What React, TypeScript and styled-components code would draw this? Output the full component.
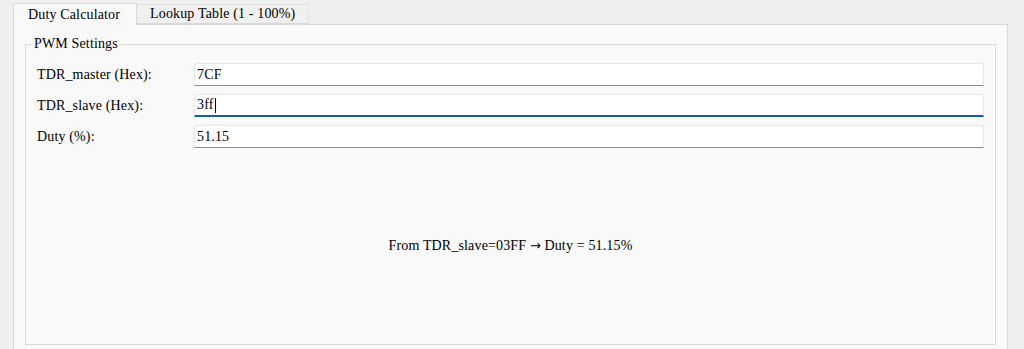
import React from 'react'
import styled, { createGlobalStyle } from 'styled-components'

const GlobalStyle = createGlobalStyle`
  html, body {
    margin: 0;
    padding: 0;
    background: #f0f0f0;
    overflow: hidden;
  }
  body {
    font-family: 'Liberation Serif', 'Noto Sans CJK TC', serif;
    font-size: 14px;
    letter-spacing: 0.15px;
    color: #000;
  }
`

const Window = styled.div`
  width: 1024px;
  height: 349px;
  box-sizing: border-box;
  padding: 3px 16px 0 13px;
  display: flex;
  flex-direction: column;
`

const TabBar = styled.div`
  display: flex;
  align-items: flex-end;
  height: 21px;
  position: relative;
  z-index: 1;
`

const Tab = styled.div<{ $active?: boolean }>`
  box-sizing: border-box;
  height: ${(p) => (p.$active ? '22px' : '20px')};
  margin-bottom: ${(p) => (p.$active ? '-1px' : '0')};
  padding: ${(p) => (p.$active ? '0 16px 0 14px' : '0 13px 0 13px')};
  display: flex;
  align-items: center;
  background: ${(p) => (p.$active ? '#f9f9f9' : '#f0f0f0')};
  border: 1px solid ${(p) => (p.$active ? '#d9d9d9' : '#e3e3e3')};
  border-bottom: ${(p) => (p.$active ? 'none' : '1px solid #d9d9d9')};
  border-left: ${(p) => (p.$active ? '1px solid #d9d9d9' : 'none')};
  white-space: nowrap;
  line-height: 16px;
`

const Pane = styled.div`
  flex: 1;
  background: #f9f9f9;
  border: 1px solid #d9d9d9;
  border-bottom: none;
  padding: 11px 11px 0 11px;
`

const Group = styled.fieldset`
  margin: 0;
  box-sizing: border-box;
  height: 309px;
  border: 1px solid #dadada;
  padding: 11px 11px 0 11px;
  min-width: 0;
`

const Legend = styled.legend`
  padding: 0 1px;
  margin-left: -4px;
  line-height: 16px;
  font-size: 14px;
`

const Form = styled.div`
  display: grid;
  grid-template-columns: 157px 1fr;
  row-gap: 8px;
  align-items: center;
`

const Label = styled.div`
  line-height: 16px;
`

const Field = styled.div<{ $focused?: boolean }>`
  box-sizing: border-box;
  height: 23px;
  background: #fff;
  border: 1px solid #e6e6e6;
  border-bottom: ${(p) => (p.$focused ? '2px solid #1260a8' : '1px solid #8c8c8c')};
  border-radius: 3px 3px 0 0;
  padding: 0 2px;
  display: flex;
  align-items: center;
  line-height: 16px;
`

const Caret = styled.span`
  display: inline-block;
  width: 1px;
  height: 15px;
  background: #000;
  margin-left: 1px;
`

const Result = styled.div`
  height: 195px;
  display: flex;
  align-items: center;
  justify-content: center;
  line-height: 16px;
  white-space: pre;
`

const Arrow = styled.span`
  font-family: 'DejaVu Sans', sans-serif;
  font-size: 13px;
  letter-spacing: 0;
`

export default function App() {
  return (
    <>
      <GlobalStyle />
      <Window>
        <TabBar>
          <Tab $active>Duty Calculator</Tab>
          <Tab>Lookup Table (1 - 100%)</Tab>
        </TabBar>
        <Pane>
          <Group>
            <Legend>PWM Settings</Legend>
            <Form>
              <Label>TDR_master (Hex):</Label>
              <Field>7CF</Field>
              <Label>TDR_slave (Hex):</Label>
              <Field $focused>
                3ff
                <Caret />
              </Field>
              <Label>Duty (%):</Label>
              <Field>51.15</Field>
            </Form>
            <Result>
              From TDR_slave=03FF <Arrow>→</Arrow> Duty = 51.15%
            </Result>
          </Group>
        </Pane>
      </Window>
    </>
  )
}
